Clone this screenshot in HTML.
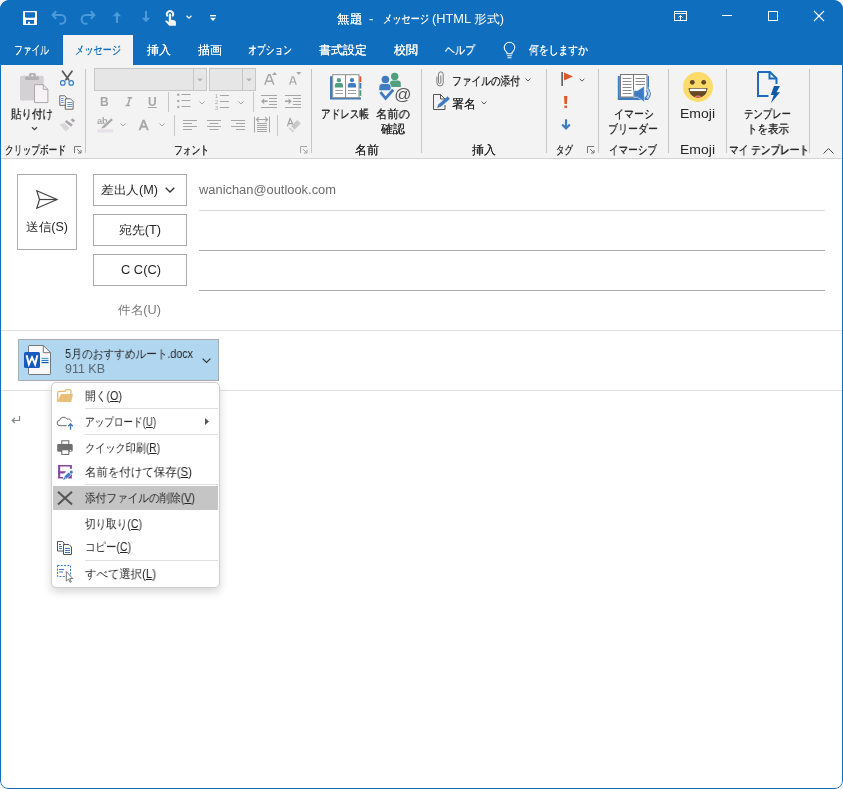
<!DOCTYPE html>
<html><head><meta charset="utf-8">
<style>
*{margin:0;padding:0;box-sizing:border-box}
html,body{width:843px;height:789px;overflow:hidden;background:#f6f6f6}
body{font-family:"Liberation Sans",sans-serif;font-size:12px;color:#262626;position:relative}
.win{position:absolute;left:0;top:0;width:843px;height:789px;border-radius:9px 9px 8px 8px;overflow:hidden;background:#fff}
.frame{position:absolute;left:0;top:0;width:843px;height:789px;border:1px solid #106ebe;border-radius:9px 9px 8px 8px;pointer-events:none}
.a{position:absolute}
.t{position:absolute;white-space:nowrap;line-height:14px;font-size:12px;text-shadow:0.2px 0 0 currentColor;will-change:transform}
#title{position:absolute;left:0;top:0;width:843px;height:65px;background:#106ebe}
#ribbon{position:absolute;left:0;top:65px;width:843px;height:94px;background:#f3f3f3;border-bottom:1px solid #d4d4d4}
.sep{position:absolute;width:1px;background:#c6c6c6}
.w{color:#fff}
.gl{color:#262626}
.dis{color:#a6a6a6}
svg{position:absolute;overflow:visible;will-change:transform}
.n{text-shadow:none}
#compose .t{text-shadow:none}
</style></head><body>
<div class="win">
<div id="title">
  <!-- QAT icons -->
  <svg style="left:23px;top:11px" width="14" height="14" viewBox="0 0 14 14"><rect x="0" y="0" width="14" height="14" rx=".5" fill="#fff"/><path d="M2 1.3h10v4.7l-.8.8H2.8L2 6z" fill="#106ebe"/><rect x="3" y="9" width="8" height="3.8" fill="#106ebe"/><rect x="5" y="10.8" width="2" height="2" fill="#fff"/></svg>
  <svg style="left:51px;top:10px" width="16" height="15" viewBox="0 0 16 15"><path d="M5.2 1.3L1.6 5 5.2 8.7" fill="none" stroke="#4b9ad9" stroke-width="2"/><path d="M1.8 5H10a4.4 4.4 0 0 1 0 8.8H8.5" fill="none" stroke="#4b9ad9" stroke-width="2"/></svg>
  <svg style="left:80px;top:10px" width="16" height="15" viewBox="0 0 16 15"><path d="M10.8 1.3L14.4 5 10.8 8.7" fill="none" stroke="#4b9ad9" stroke-width="2"/><path d="M14.2 5H6a4.4 4.4 0 0 0 0 8.8H7.5" fill="none" stroke="#4b9ad9" stroke-width="2"/></svg>
  <svg style="left:112px;top:11px" width="10" height="12" viewBox="0 0 10 12"><path d="M5 12V3" stroke="#4b9ad9" stroke-width="2"/><path d="M.8 5.2L5 .8l4.2 4.4z" fill="#4b9ad9"/></svg>
  <svg style="left:141px;top:11px" width="10" height="12" viewBox="0 0 10 12"><path d="M5 0v9" stroke="#4b9ad9" stroke-width="2"/><path d="M.8 6.8L5 11.2l4.2-4.4z" fill="#4b9ad9"/></svg>
  <svg style="left:164px;top:10px" width="13" height="17" viewBox="0 0 13 17"><path d="M3.7 6.3A3.1 3.1 0 1 1 8.3 6.3" fill="none" stroke="#f2f2f2" stroke-width="1.9"/><path d="M4.8 4.6a1.15 1.15 0 0 1 2.3 0V9.7L10.3 10.3Q11.9 10.6 11.9 12.2V15.8H5.2L1 11Q1.7 10.1 2.7 10.6L4.8 12z" fill="#f2f2f2"/></svg>
  <svg style="left:186px;top:15px" width="6" height="4" viewBox="0 0 6 4"><path d="M.5.8L3 3.2 5.5.8" fill="none" stroke="#f2f2f2" stroke-width="1.3"/></svg>
  <svg style="left:210px;top:15px" width="6" height="7" viewBox="0 0 6 7"><rect x="0" y="0" width="6" height="1.3" fill="#fff"/><path d="M0 2.8h6L3 6z" fill="#fff"/></svg>
  <div class="t w" style="left:337px;top:12px;transform-origin:0 0;transform:scaleX(1.0417);--w:25px">無題</div><div class="t w" style="left:369px;top:12px">-</div><div class="t w" style="left:383px;top:12px;transform-origin:0 0;transform:scaleX(0.7667);--w:46px">メッセージ</div><div class="t w" style="left:432px;top:12px;transform-origin:0 0;transform:scaleX(1.0657);--w:72px;text-shadow:none"><span class="n">(HTML</span> 形式<span class="n">)</span></div>
  <!-- window controls -->
  <svg style="left:674px;top:11px" width="13" height="10" viewBox="0 0 13 10"><rect x=".5" y=".5" width="12" height="9" fill="none" stroke="#fff"/><path d="M.5 2.5h12M6.5 9V4.5M4.5 6.5l2-2 2 2" fill="none" stroke="#fff"/></svg>
  <div class="a" style="left:722px;top:15px;width:10px;height:1px;background:#fff"></div>
  <div class="a" style="left:768px;top:11px;width:10px;height:10px;border:1px solid #fff"></div>
  <svg style="left:814px;top:11px" width="10" height="10" viewBox="0 0 10 10"><path d="M0 0l10 10M10 0L0 10" stroke="#fff" stroke-width="1.1"/></svg>
  <!-- tabs -->
  <div class="a" style="left:63px;top:35px;width:70px;height:30px;background:#f3f3f3"></div>
  <div class="t w" style="left:14px;top:43px;transform-origin:0 0;transform:scaleX(0.7292);--w:35px">ファイル</div>
  <div class="t" style="left:75px;top:43px;color:#106ebe;transform-origin:0 0;transform:scaleX(0.7667);--w:46px">メッセージ</div>
  <div class="t w" style="left:147px;top:43px">挿入</div>
  <div class="t w" style="left:198px;top:43px">描画</div>
  <div class="t w" style="left:248px;top:43px;transform-origin:0 0;transform:scaleX(0.7333);--w:44px">オプション</div>
  <div class="t w" style="left:319px;top:43px">書式設定</div>
  <div class="t w" style="left:394px;top:43px">校閲</div>
  <div class="t w" style="left:445px;top:43px;transform-origin:0 0;transform:scaleX(0.8333);--w:30px">ヘルプ</div>
  <svg style="left:503px;top:42px" width="13" height="17" viewBox="0 0 13 17"><path d="M4 11.8V10.6C2.2 9.2 1.2 7.6 1.2 5.6a5.3 5.3 0 0 1 10.6 0c0 2-1 3.6-2.8 5v1.2z" fill="none" stroke="#fff" stroke-width="1.1"/><path d="M4.2 13.8h4.6M4.6 15.8h3.8" stroke="#fff" stroke-width="1.1"/></svg>
  <div class="t w" style="left:529px;top:43px;transform-origin:0 0;transform:scaleX(0.8194);--w:59px">何をしますか</div>
</div>

<div id="ribbon"><div class="a" style="left:0;top:-1px;width:843px;height:94px">
  <!-- Clipboard -->
  <svg style="left:20px;top:8px" width="29" height="32" viewBox="0 0 29 32"><rect x="0" y="3.8" width="23.7" height="24.8" rx="1.5" fill="#d3d1d3"/><rect x="5.1" y="4.5" width="13.7" height="3.5" rx=".8" fill="#b2b0b2"/><path d="M9 4.6V2.5A1.5 1.5 0 0 1 10.5 1h3.8a1.5 1.5 0 0 1 1.5 1.5v2.1z" fill="#b2b0b2"/><circle cx="12.3" cy="3.6" r="1" fill="#f3f3f3"/><path d="M14.5 12.7h8.8l4.6 4.6v13.3H14.5z" fill="#f6f2f6" stroke="#a9a7a9"/><path d="M23.3 12.7v4.6h4.6" fill="none" stroke="#a9a7a9"/></svg>
  <div class="t" style="left:11px;top:43px;transform-origin:0 0;transform:scaleX(0.8750);--w:42px">貼り付け</div>
  <svg style="left:31px;top:62px" width="7" height="5" viewBox="0 0 7 5"><path d="M1 1.2l2.5 2.5L6 1.2" fill="none" stroke="#444" stroke-width="1.3"/></svg>
  <svg style="left:60px;top:6px" width="15" height="16" viewBox="0 0 15 16"><path d="M2.5 1.2L8.7 9.8M12 1.2L5.8 9.8" stroke="#555" stroke-width="1.7" stroke-linecap="round"/><circle cx="2.8" cy="12.9" r="2.3" fill="#f3f3f3" stroke="#3a7cc2" stroke-width="1.2"/><circle cx="11.2" cy="12.9" r="2.3" fill="#f3f3f3" stroke="#3a7cc2" stroke-width="1.2"/></svg>
  <svg style="left:59px;top:31px" width="16" height="15" viewBox="0 0 16 15"><path d="M.8.8h5l1.5 1.5v8H.8z" fill="#fff" stroke="#555" stroke-width=".9"/><path d="M6.3 3.8h5.2l2.6 2.6v7.8H6.3z" fill="#fff" stroke="#555" stroke-width=".9"/><path d="M2 3.5h2.7M2 5.5h2.7M2 7.5h2.7M8.2 7.5h4.9M8.2 9.5h4.9M8.2 11.5h4.9" stroke="#3a7cc2" stroke-width=".8"/></svg>
  <svg style="left:59px;top:54px" width="17" height="15" viewBox="0 0 17 15"><path d="M13.5 .2L16.1 2.4 14.2 4.5 11.7 2.1z" fill="#a9a7a9"/><path d="M7.3 2L13.8 6.6 12.1 8.8 5.9 4.1z" fill="#a9a7a9"/><path d="M.6 6.4L5.4 4.9 10.5 9.9 6.7 13.6z" fill="#d9d6d9"/></svg>
  <div class="t" style="left:5px;top:79px;transform-origin:0 0;transform:scaleX(0.7262);--w:61px">クリップボード</div>
  <svg style="left:74px;top:82px" width="8" height="8" viewBox="0 0 8 8"><path d="M.5 7V.5H7M3 3l4 4M4 7h3V4" fill="none" stroke="#777" stroke-width="1"/></svg>
  <div class="sep" style="left:85px;top:5px;height:84px"></div>

  <!-- Font -->
  <div class="a" style="left:94px;top:4px;width:113px;height:23px;background:#e6e6e6;border:1px solid #c6c6c6"></div>
  <div class="a" style="left:193px;top:5px;width:1px;height:21px;background:#c6c6c6"></div>
  <svg style="left:197px;top:14px" width="6" height="4" viewBox="0 0 6 4"><path d="M0 .5h6L3 3.5z" fill="#b4b4b4"/></svg>
  <div class="a" style="left:209px;top:4px;width:47px;height:23px;background:#e6e6e6;border:1px solid #c6c6c6"></div>
  <div class="a" style="left:242px;top:5px;width:1px;height:21px;background:#c6c6c6"></div>
  <svg style="left:246px;top:14px" width="6" height="4" viewBox="0 0 6 4"><path d="M0 .5h6L3 3.5z" fill="#b4b4b4"/></svg>
  
  <svg style="left:264px;top:8px" width="13" height="13" viewBox="0 0 13 13"><path d="M.8 12.8L4.6 2.8h1.4l3.8 10M2.3 9.2h6" fill="none" stroke="#a6a6a6" stroke-width="1.5"/><path d="M8 3h5l-2.5-3z" fill="#a6a6a6"/></svg>
  
  <svg style="left:289px;top:8px" width="13" height="13" viewBox="0 0 13 13"><path d="M.6 12.8L3.3 4.8h1.2l2.7 8M1.7 10h4.4" fill="none" stroke="#a6a6a6" stroke-width="1.2"/><path d="M7.3 0h5l-2.5 3z" fill="#a6a6a6"/></svg>

  <div class="t dis" style="left:100px;top:31px;font-size:12px;font-weight:bold;line-height:14px"><span class="n">B</span></div>
  <svg style="left:125px;top:33px" width="8" height="10" viewBox="0 0 8 10"><path d="M2.6 .8H7.2M.4 8.4H5M5.1 .8L2.6 8.4" fill="none" stroke="#a6a6a6" stroke-width="1.5"/></svg>
  <div class="t dis" style="left:148px;top:31px;font-size:12px;font-weight:bold;line-height:14px;text-decoration:underline"><span class="n">U</span></div>
  <div class="sep" style="left:168px;top:28px;height:20px"></div>
  <svg style="left:177px;top:29px" width="14" height="16" viewBox="0 0 14 16"><circle cx="1.3" cy="1.8" r="1.2" fill="#a6a6a6"/><circle cx="1.3" cy="8" r="1.2" fill="#a6a6a6"/><circle cx="1.3" cy="14" r="1.2" fill="#a6a6a6"/><path d="M4.5 1.5h9M4.5 7.5h9M4.5 13.5h9" stroke="#a6a6a6" stroke-width="1"/></svg>
  <svg style="left:199px;top:37px" width="6" height="4" viewBox="0 0 6 4"><path d="M.5.5l2.5 2.5 2.5-2.5" fill="none" stroke="#a6a6a6"/></svg>
  <svg style="left:215px;top:29px" width="15" height="18" viewBox="0 0 15 18"><text x="0" y="5" font-size="5.5" fill="#a6a6a6" font-family="Liberation Sans">1</text><text x="0" y="11" font-size="5.5" fill="#a6a6a6" font-family="Liberation Sans">2</text><text x="0" y="17" font-size="5.5" fill="#a6a6a6" font-family="Liberation Sans">3</text><path d="M5 2.5h9M5 8.5h9M5 14.5h9" stroke="#a6a6a6" stroke-width="1"/></svg>
  <svg style="left:238px;top:37px" width="6" height="4" viewBox="0 0 6 4"><path d="M.5.5l2.5 2.5 2.5-2.5" fill="none" stroke="#a6a6a6"/></svg>
  <div class="sep" style="left:253px;top:28px;height:20px"></div>
  <svg style="left:261px;top:31px" width="16" height="13" viewBox="0 0 16 13"><path d="M0 .5h16M8 3.5h8M8 6.5h8M8 9.5h8M0 12.5h16" stroke="#a6a6a6"/><path d="M0 6.2L3.2 3.2v6z" fill="#a6a6a6"/><path d="M2.5 6.2h4.2" stroke="#a6a6a6" stroke-width="1.6"/></svg>
  <svg style="left:285px;top:31px" width="16" height="13" viewBox="0 0 16 13"><path d="M0 .5h16M8 3.5h8M8 6.5h8M8 9.5h8M0 12.5h16" stroke="#a6a6a6"/><path d="M6.8 6.2L3.6 3.2v6z" fill="#a6a6a6"/><path d="M0 6.2h4.3" stroke="#a6a6a6" stroke-width="1.6"/></svg>

  <svg style="left:97px;top:53px" width="17" height="16" viewBox="0 0 17 16"><text x="0" y="6.8" font-size="9.2" font-weight="bold" fill="#a6a6a6" font-family="Liberation Sans">ab</text><path d="M3.6 11.8L5.3 9.2 14.4 1.1 16.2 3.1 7.4 11.2z" fill="#a9a9a9" stroke="#f3f3f3" stroke-width=".6"/><rect x=".3" y="12.2" width="15.6" height="3.3" fill="#e6e1e8"/></svg>
  <svg style="left:120px;top:59px" width="6" height="4" viewBox="0 0 6 4"><path d="M.5.5l2.5 2.5 2.5-2.5" fill="none" stroke="#a6a6a6"/></svg>
  <div class="t dis" style="left:139px;top:53px;font-size:14px;line-height:16px;-webkit-text-stroke:0.6px #a6a6a6"><span class="n">A</span></div>
  <svg style="left:159px;top:59px" width="6" height="4" viewBox="0 0 6 4"><path d="M.5.5l2.5 2.5 2.5-2.5" fill="none" stroke="#a6a6a6"/></svg>
  <div class="sep" style="left:174px;top:51px;height:21px"></div>
  <svg style="left:183px;top:56px" width="14" height="10" viewBox="0 0 14 10"><path d="M0 .5h14M0 3.5h9M0 6.5h14M0 9.5h9" stroke="#a6a6a6"/></svg>
  <svg style="left:207px;top:56px" width="14" height="10" viewBox="0 0 14 10"><path d="M0 .5h14M2.5 3.5h9M0 6.5h14M2.5 9.5h9" stroke="#a6a6a6"/></svg>
  <svg style="left:231px;top:56px" width="14" height="10" viewBox="0 0 14 10"><path d="M0 .5h14M5 3.5h9M0 6.5h14M5 9.5h9" stroke="#a6a6a6"/></svg>
  <svg style="left:254px;top:52px" width="16" height="17" viewBox="0 0 16 17"><path d="M.5 .5v16M15.5 .5v16M3 7.5h10M3 9.5h10M3 11.5h10M3 13.5h10M3 15.5h10" stroke="#a6a6a6"/><path d="M2.5 3.5h11M4.8 1.2L2.5 3.5l2.3 2.3M11.2 1.2l2.3 2.3-2.3 2.3" stroke="#a6a6a6" stroke-width="1.2" fill="none"/></svg>
  <div class="sep" style="left:277px;top:51px;height:21px"></div>
  <svg style="left:286px;top:54px" width="16" height="16" viewBox="0 0 16 16"><path d="M1.4 8.2L4.1.6 6.9 6.4M2.5 5.6H6.2" fill="none" stroke="#a0a0a0" stroke-width="1.2"/><path d="M5.1 8L11.1 2 14.8 5.5 8.5 11.7z" fill="#c8c8c8"/><path d="M2.4 10.3L3.6 9.2 8.2 13.1 6.8 14.4z" fill="#d0d0d0"/></svg>
  <div class="t" style="left:174px;top:79px;transform-origin:0 0;transform:scaleX(0.7292);--w:35px">フォント</div>
  <svg style="left:300px;top:82px" width="8" height="8" viewBox="0 0 8 8"><path d="M.5 7V.5H7M3 3l4 4M4 7h3V4" fill="none" stroke="#a6a6a6" stroke-width="1"/></svg>
  <div class="sep" style="left:311px;top:5px;height:84px"></div>

  <!-- Names -->
  <svg style="left:330px;top:10px" width="32" height="26" viewBox="0 0 32 26"><path d="M0 2.3h2.3V23.4H31v2.1H0z" fill="#3d7cc0"/><rect x="2.7" y=".7" width="12.9" height="23" fill="#fff" stroke="#8a8a8a"/><rect x="15.6" y=".7" width="13.4" height="23" fill="#fff" stroke="#8a8a8a"/><rect x="29.5" y="2.3" width="1.8" height="5.7" fill="#e0572b"/><rect x="29.5" y="9" width="1.8" height="5.6" fill="#3d7cc0"/><rect x="29.5" y="16.2" width="1.8" height="5.7" fill="#50a07f"/><circle cx="8.9" cy="6.2" r="2.1" fill="#50a07f"/><path d="M4.8 13.6V11.2Q4.8 9 7 9h1.9l0 1.2 0-1.2h1.9Q13 9 13 11.2v2.4z" fill="#50a07f"/><circle cx="22" cy="6.2" r="2.1" fill="#3d7cc0"/><path d="M17.9 13.6V11.2Q17.9 9 20.1 9h3.8Q26 9 26 11.2v2.4z" fill="#3d7cc0"/><path d="M5.3 16.5h7.7M5.3 19.5h7.7M18 16.5h8M18 19.5h8" stroke="#a0a0a0"/></svg>
  <div class="t" style="left:321px;top:43px;transform-origin:0 0;transform:scaleX(0.8000);--w:48px">アドレス帳</div>
  <svg style="left:378px;top:8px" width="32" height="32" viewBox="0 0 32 32"><circle cx="16.7" cy="4.4" r="3.7" fill="#50a07f"/><path d="M12 15.1v-3.6q0-3.1 3.1-3.1h4.6q3.1 0 3.1 3.1v3.6z" fill="#50a07f"/><circle cx="7.4" cy="7.5" r="3.8" fill="#3d7cc0"/><path d="M.9 18.7v-3.8q0-3.4 3.4-3.4h5.4q3.4 0 3.4 3.4v3.8z" fill="#3d7cc0" stroke="#f3f3f3" stroke-width=".8"/><path d="M2.4 20.2l5.2 6.2 7.6-8.6" fill="none" stroke="#f3f3f3" stroke-width="4.6"/><path d="M2.4 20.2l5.2 6.2 7.6-8.6" fill="none" stroke="#3d7cc0" stroke-width="2.8"/><text x="16.3" y="28.3" font-size="17" fill="#555" font-family="Liberation Sans">@</text></svg>
  <div class="t" style="left:376px;top:43px;transform-origin:0 0;transform:scaleX(0.9444);--w:34px">名前の</div>
  <div class="t" style="left:381px;top:58px;transform-origin:0 0;transform:scaleX(1.0000);--w:24px">確認</div>
  <div class="t" style="left:355px;top:79px;transform-origin:0 0;transform:scaleX(1.0000);--w:24px">名前</div>
  <div class="sep" style="left:421px;top:5px;height:84px"></div>

  <!-- Insert -->
  <svg style="left:436px;top:7px" width="9" height="16" viewBox="0 0 9 16"><path d="M4.8 4.5V11.3A1.15 1.15 0 0 1 2.5 11.3V3.2A2.35 2.35 0 0 1 7.2 3.2V11.8A3.15 3.15 0 0 1 .9 11.8V5.5" fill="none" stroke="#6e6e6e" stroke-width=".9"/></svg>
  <div class="t" style="left:452px;top:10px;transform-origin:0 0;transform:scaleX(0.8095);--w:68px">ファイルの添付</div>
  <svg style="left:525px;top:14px" width="6" height="4" viewBox="0 0 6 4"><path d="M.5.5l2.5 2.5 2.5-2.5" fill="none" stroke="#555"/></svg>
  <svg style="left:433px;top:30px" width="17" height="16" viewBox="0 0 17 16"><path d="M7.5 .5H.5v15h11.5v-4.5" fill="none" stroke="#555"/><path d="M7.5 .5l4.5 4.5v2.5" fill="none" stroke="#555"/><path d="M7.5 .5V5H12" fill="none" stroke="#555"/><g transform="translate(4.3 13.6) rotate(-41)"><path d="M0 0L3.2 -1.7H15.2V1.7H3.2z" fill="#3d7cc0"/><path d="M0 0L1.6 -.85V.85z" fill="#2a5a90"/></g></svg>
  <div class="t" style="left:452px;top:33px;transform-origin:0 0;transform:scaleX(1.0000);--w:24px">署名</div>
  <svg style="left:481px;top:37px" width="6" height="4" viewBox="0 0 6 4"><path d="M.5.5l2.5 2.5 2.5-2.5" fill="none" stroke="#555"/></svg>
  <div class="t" style="left:472px;top:79px;transform-origin:0 0;transform:scaleX(1.0000);--w:24px">挿入</div>
  <div class="sep" style="left:546px;top:5px;height:84px"></div>

  <!-- Tags -->
  <svg style="left:561px;top:8px" width="12" height="15" viewBox="0 0 12 15"><rect x=".3" y="0" width="1.7" height="14" fill="#666"/><path d="M3 .6L12 4.6 3 8.6z" fill="#e0572b"/></svg>
  <svg style="left:579px;top:14px" width="6" height="4" viewBox="0 0 6 4"><path d="M.6.8L3 3.1 5.4.8" fill="none" stroke="#555" stroke-width="1"/></svg>
  <svg style="left:564px;top:32px" width="4" height="12" viewBox="0 0 4 12"><path d="M0 0h3.4l-.5 8H.5z" fill="#e0572b"/><rect x=".4" y="9.6" width="2.6" height="2.3" fill="#e0572b"/></svg>
  <svg style="left:561px;top:55px" width="10" height="11" viewBox="0 0 10 11"><path d="M5 .3v8.5" stroke="#3d7cc0" stroke-width="2.2"/><path d="M1.2 5.5L5 9.4 8.8 5.5" fill="none" stroke="#3d7cc0" stroke-width="2.2"/></svg>
  <div class="t" style="left:556px;top:79px;transform-origin:0 0;transform:scaleX(0.7083);--w:17px">タグ</div>
  <svg style="left:587px;top:82px" width="8" height="8" viewBox="0 0 8 8"><path d="M.5 7V.5H7M3 3l4 4M4 7h3V4" fill="none" stroke="#777" stroke-width="1"/></svg>
  <div class="sep" style="left:598px;top:5px;height:84px"></div>

  <!-- Immersive -->
  <svg style="left:617px;top:9px" width="34" height="30" viewBox="0 0 34 30"><path d="M.8 3h2v21.2h27.8V3h1.4v23.9H.8z" fill="#3d7cc0"/><rect x="3.5" y="1.5" width="13" height="22.5" fill="#fff" stroke="#777"/><rect x="16.5" y="1.5" width="13.5" height="22.5" fill="#fff" stroke="#777"/><path d="M5.5 5.5h9M5.5 8.5h9M5.5 11.5h9M5.5 14.5h9M5.5 17.5h9M5.5 20.5h9M18.5 5.5h9.5M18.5 8.5h9.5M18.5 11.5h9.5" stroke="#8c8c8c"/><path d="M16.7 17.6h3.8l6.8-4.6v15.9l-6.8-4.7h-3.8z" fill="#3d7cc0" stroke="#fff" stroke-width=".6"/><path d="M29 17.6a4 4 0 0 1 0 6.4M30.8 15.2a7.2 7.2 0 0 1 0 11" fill="none" stroke="#f8f8f8" stroke-width="2.4"/><path d="M29 17.6a4 4 0 0 1 0 6.4M30.8 15.2a7.2 7.2 0 0 1 0 11" fill="none" stroke="#3d7cc0" stroke-width="1.1"/></svg>
  <div class="t" style="left:614px;top:43px;transform-origin:0 0;transform:scaleX(0.8333);--w:40px">イマーシ</div>
  <div class="t" style="left:608px;top:58px;transform-origin:0 0;transform:scaleX(0.8333);--w:50px">ブリーダー</div>
  <div class="t" style="left:609px;top:79px;transform-origin:0 0;transform:scaleX(0.8000);--w:48px">イマーシブ</div>
  <div class="sep" style="left:668px;top:5px;height:84px"></div>

  <!-- Emoji -->
  <svg style="left:683px;top:8px" width="30" height="30" viewBox="0 0 30 30"><circle cx="15" cy="15" r="15" fill="#fddb6a"/><circle cx="9.3" cy="10.3" r="2.4" fill="#654a26"/><circle cx="20.7" cy="10.3" r="2.4" fill="#654a26"/><path d="M5.6 16h18.8c0 5.6-4.2 9.7-9.4 9.7S5.6 21.6 5.6 16z" fill="#654a26"/><rect x="6.8" y="16.7" width="16.4" height="2.4" fill="#fff"/><path d="M11.6 24.6c1.2-1.4 5.6-1.4 6.8 0-1.4 1-5.4 1-6.8 0z" fill="#f06a78"/></svg>
  <div class="t" style="left:680px;top:43px;transform-origin:0 0;transform:scaleX(1.1661);--w:35px;text-shadow:none"><span class="n">Emoji</span></div>
  <div class="t" style="left:680px;top:79px;transform-origin:0 0;transform:scaleX(1.1661);--w:35px;text-shadow:none"><span class="n">Emoji</span></div>
  <div class="sep" style="left:726px;top:5px;height:84px"></div>

  <!-- My templates -->
  <svg style="left:757px;top:7px" width="24" height="32" viewBox="0 0 24 32"><path d="M1 1h12l6.5 6.5v5.5M1 1v24h10.5" fill="none" stroke="#1c6cc0" stroke-width="2"/><path d="M12.5 1v6.5h7" fill="none" stroke="#1c6cc0" stroke-width="2"/><path d="M17 15h6l-3.5 6.3H23l-9.2 11 3-8.2h-3z" fill="#0f5aa8"/></svg>
  <div class="t" style="left:744px;top:43px;transform-origin:0 0;transform:scaleX(0.7833);--w:47px">テンプレー</div>
  <div class="t" style="left:747px;top:58px;transform-origin:0 0;transform:scaleX(0.8750);--w:42px">トを表示</div>
  <div class="t" style="left:729px;top:79px;transform-origin:0 0;transform:scaleX(0.8053);--w:80px">マイ テンプレート</div>
  <div class="sep" style="left:809px;top:5px;height:84px"></div>
  <svg style="left:823px;top:84px" width="11" height="6" viewBox="0 0 11 6"><path d="M.5 5.5l5-5 5 5" fill="none" stroke="#444"/></svg>
</div></div>

<div id="compose" style="text-shadow:none">
  <div class="a" style="left:17px;top:174px;width:60px;height:76px;border:1px solid #ababab;background:#fff"></div>
  <svg style="left:36px;top:190px" width="22" height="19" viewBox="0 0 22 19"><path d="M.8 .8L21 9.5.8 18.2 3.5 9.5z" fill="none" stroke="#444" stroke-width="1.2" stroke-linejoin="miter"/><path d="M3.5 9.5H21" stroke="#444" stroke-width="1.2"/></svg>
  <div class="t" style="left:26px;top:220px;transform-origin:0 0;transform:scaleX(1.0500);--w:42px">送信<span class="n">(S)</span></div>

  <div class="a" style="left:93px;top:174px;width:94px;height:32px;border:1px solid #ababab;background:#fff"></div>
  <div class="t" style="left:101px;top:183px;transform-origin:0 0;transform:scaleX(1.0556);--w:57px">差出人<span class="n">(M)</span></div>
  <svg style="left:165px;top:187px" width="10" height="6" viewBox="0 0 10 6"><path d="M.7.7l4.3 4.3 4.3-4.3" fill="none" stroke="#333" stroke-width="1.3"/></svg>
  <div class="a" style="left:93px;top:214px;width:94px;height:32px;border:1px solid #ababab;background:#fff"></div>
  <div class="t" style="left:119px;top:223px;transform-origin:0 0;transform:scaleX(1.0679);--w:42px">宛先<span class="n">(T)</span></div>
  <div class="a" style="left:93px;top:254px;width:94px;height:32px;border:1px solid #ababab;background:#fff"></div>
  <div class="t" style="left:121px;top:263px;transform-origin:0 0;transform:scaleX(1.0716);--w:40px"><span class="n">C C(C)</span></div>
  <div class="t" style="left:118px;top:303px;transform-origin:0 0;transform:scaleX(1.0572);--w:43px;color:#7a7a7a">件名<span class="n">(U)</span></div>

  <div class="t" style="left:199px;top:183px;color:#6b6b6b;transform-origin:0 0;transform:scaleX(1.0737);--w:137px"><span class="n">wanichan@outlook.com</span></div>
  <div class="a" style="left:199px;top:210px;width:626px;height:1px;background:#dcdcdc"></div>
  <div class="a" style="left:199px;top:250px;width:626px;height:1px;background:#ababab"></div>
  <div class="a" style="left:199px;top:290px;width:626px;height:1px;background:#ababab"></div>
  <div class="a" style="left:0;top:330px;width:843px;height:1px;background:#e1e1e1"></div>

  <!-- attachment -->
  <div class="a" style="left:18px;top:339px;width:201px;height:42px;background:#b1d6f0;border:1px solid #acacac"></div>
  <svg style="left:24px;top:345px" width="27" height="30" viewBox="0 0 27 30"><path d="M5 .5H19.3L26.5 7.7V28.8a.7.7 0 0 1-.7.7H5.2a.7.7 0 0 1-.7-.7V1.2A.7.7 0 0 1 5 .5z" fill="#f9f9f9" stroke="#767676"/><path d="M19.3 .5V7.7H26.5" fill="none" stroke="#767676"/><rect x="17.5" y="12.8" width="7" height="1.2" fill="#41a5ee"/><rect x="17.5" y="14.9" width="7" height="1.2" fill="#2b7cd3"/><rect x="17.5" y="17" width="7" height="1.2" fill="#185abd"/><rect x="0" y="7" width="16" height="16" rx="1.6" fill="#185abd"/><path d="M2.6 10.2L4.9 19.2 8 12.4 11.1 19.2 13.4 10.2" fill="none" stroke="#fff" stroke-width="2" stroke-linejoin="miter" stroke-miterlimit="10"/></svg>
  <div class="t" style="left:65px;top:347px;transform-origin:0 0;transform:scaleX(0.8928);--w:128px"><span class="n">5</span>月のおすすめルート<span class="n">.docx</span></div>
  <div class="t" style="left:65px;top:362px;color:#5c6670;transform-origin:0 0;transform:scaleX(1.0394);--w:40px;text-shadow:none"><span class="n">911 KB</span></div>
  <svg style="left:202px;top:358px" width="9" height="5" viewBox="0 0 9 5"><path d="M.6.6l3.9 3.9 3.9-3.9" fill="none" stroke="#333" stroke-width="1.2"/></svg>
  <div class="a" style="left:0;top:390px;width:843px;height:1px;background:#e1e1e1"></div>

  <svg style="left:11px;top:416px" width="9" height="8" viewBox="0 0 9 8"><path d="M8.5 0v4.5H1.5M4 2L1.2 4.5 4 7" fill="none" stroke="#8a8a8a" stroke-width="1.2"/></svg>

  <!-- context menu -->
  <div class="a" style="left:51px;top:382px;width:169px;height:206px;background:#fff;border:1px solid #cfcfcf;border-radius:5px;box-shadow:0 4px 9px rgba(0,0,0,.16)"></div>
  <svg style="left:57px;top:389px" width="17" height="14" viewBox="0 0 17 14"><path d="M.7 12.5V3.5Q.7 2.3 1.9 2.3H8.3L9.4 .7H13Q13.9 .7 13.9 1.6V5.6" fill="none" stroke="#e6bb6e" stroke-width="1.3"/><path d="M4 5.1H16L14.2 12.9H.2z" fill="#e8be78"/></svg>
  <div class="t" style="left:85px;top:389px;transform-origin:0 0;transform:scaleX(0.8949);--w:37px">開く<span class="n">(</span><u><span class="n">O</span></u><span class="n">)</span></div>
  <div class="a" style="left:85px;top:408px;width:133px;height:1px;background:#dedede"></div>
  <svg style="left:57px;top:416px" width="17" height="15" viewBox="0 0 17 15"><path d="M9.8 9.7H3A2.7 2.7 0 0 1 2.7 4.3 3.9 3.9 0 0 1 10 3.3 2.9 2.9 0 0 1 14.3 5.6" fill="none" stroke="#6a6a6a" stroke-width="1"/><path d="M13.5 13.8V7.8M11.2 10.2L13.5 7.7 15.8 10.2" fill="none" stroke="#3d7cc0" stroke-width="1.3"/></svg>
  <div class="t" style="left:85px;top:415px;transform-origin:0 0;transform:scaleX(0.8007);--w:71px">アップロード<span class="n">(</span><u><span class="n">U</span></u><span class="n">)</span></div>
  <svg style="left:205px;top:418px" width="4" height="7" viewBox="0 0 4 7"><path d="M0 0l4 3.5L0 7z" fill="#555"/></svg>
  <div class="a" style="left:85px;top:434px;width:133px;height:1px;background:#dedede"></div>
  <svg style="left:57px;top:440px" width="16" height="15" viewBox="0 0 16 15"><rect x="4.8" y=".8" width="7" height="3.6" fill="#fff" stroke="#6a6a6a"/><rect x=".2" y="4.1" width="15.5" height="7.6" rx="1.4" fill="#6e6e6e"/><rect x="4.8" y="9.8" width="7" height="4.6" fill="#fff" stroke="#6a6a6a"/><circle cx="13.6" cy="10.5" r=".8" fill="#fff"/></svg>
  <div class="t" style="left:85px;top:441px;transform-origin:0 0;transform:scaleX(0.8458);--w:75px">クイック印刷<span class="n">(</span><u><span class="n">R</span></u><span class="n">)</span></div>
  <svg style="left:57px;top:464px" width="17" height="17" viewBox="0 0 17 17"><path d="M1.1.9H14.9V4.8H12.9V2.4H3.2V7.2H9.2L7.2 9.4H3.2V13H6V14.5H1.1z" fill="#8546a6"/><path d="M14.9 10V14.5H10.5z" fill="#8546a6"/><g transform="translate(6.1 15.8) rotate(-43)"><path d="M0 0L2.6-1.4V1.4z" fill="#3d7cc0"/><rect x="3.1" y="-1.5" width="6" height="3" fill="#3d7cc0"/><rect x="9.7" y="-1.4" width="3" height="2.8" rx="1" fill="#3d7cc0"/></g></svg>
  <div class="t" style="left:85px;top:465px;transform-origin:0 0;transform:scaleX(0.9552);--w:107px">名前を付けて保存<span class="n">(</span><u><span class="n">S</span></u><span class="n">)</span></div>
  <div class="a" style="left:85px;top:484px;width:133px;height:1px;background:#dedede"></div>
  <div class="a" style="left:53px;top:486px;width:165px;height:24px;background:#c5c5c5"></div>
  <svg style="left:57px;top:491px" width="16" height="14" viewBox="0 0 16 14"><path d="M1 .8l14 12.6M15 .8L1 13.4" stroke="#555" stroke-width="2"/></svg>
  <div class="t" style="left:85px;top:491px;transform-origin:0 0;transform:scaleX(0.8870);--w:110px">添付ファイルの削除<span class="n">(</span><u><span class="n">V</span></u><span class="n">)</span></div>
  <div class="t" style="left:85px;top:517px;transform-origin:0 0;transform:scaleX(0.8814);--w:57px">切り取り<span class="n">(</span><u><span class="n">C</span></u><span class="n">)</span></div>
  <svg style="left:57px;top:541px" width="16" height="15" viewBox="0 0 16 15"><path d="M.5.5h5l1.5 1.5v8H.5z" fill="#fff" stroke="#555"/><path d="M6.5 3.5h5.5l2.5 2.5v7.5h-8z" fill="#fff" stroke="#555"/><path d="M2 5.5h3M2 7.5h3M8 7.5h5M8 9.5h5M8 11.5h5" stroke="#3d7cc0"/><path d="M2 3.5h2" stroke="#555"/></svg>
  <div class="t" style="left:85px;top:540px;transform-origin:0 0;transform:scaleX(0.8733);--w:46px">コピー<span class="n">(</span><u><span class="n">C</span></u><span class="n">)</span></div>
  <div class="a" style="left:85px;top:560px;width:133px;height:1px;background:#dedede"></div>
  <svg style="left:57px;top:565px" width="17" height="18" viewBox="0 0 17 18"><rect x=".5" y=".5" width="13" height="11" fill="none" stroke="#3d7cc0" stroke-dasharray="2 1.3"/><path d="M2 4.5h5M2 7h4" stroke="#3d7cc0"/><path d="M9.3 6.5v9.6l2.2-2 1.7 3.3 1.1-.5-1.6-3.3H15.8z" fill="#fff" stroke="#666" stroke-width=".9" stroke-linejoin="round"/></svg>
  <div class="t" style="left:85px;top:567px;transform-origin:0 0;transform:scaleX(0.9506);--w:71px">すべて選択<span class="n">(</span><u><span class="n">L</span></u><span class="n">)</span></div>
</div>
<div class="frame"></div>
<script>
(function(){
  var els=document.querySelectorAll('.t');
  for(var i=0;i<els.length;i++){
    var e=els[i];var w=e.style.getPropertyValue('--w');
    if(!w)continue;w=parseFloat(w);
    e.style.transform='none';
    var r=e.getBoundingClientRect().width;
    if(r>0){e.style.transformOrigin='0 0';e.style.transform='scaleX('+(w/r)+')';}
  }
})();
</script>
</div>
</body></html>
